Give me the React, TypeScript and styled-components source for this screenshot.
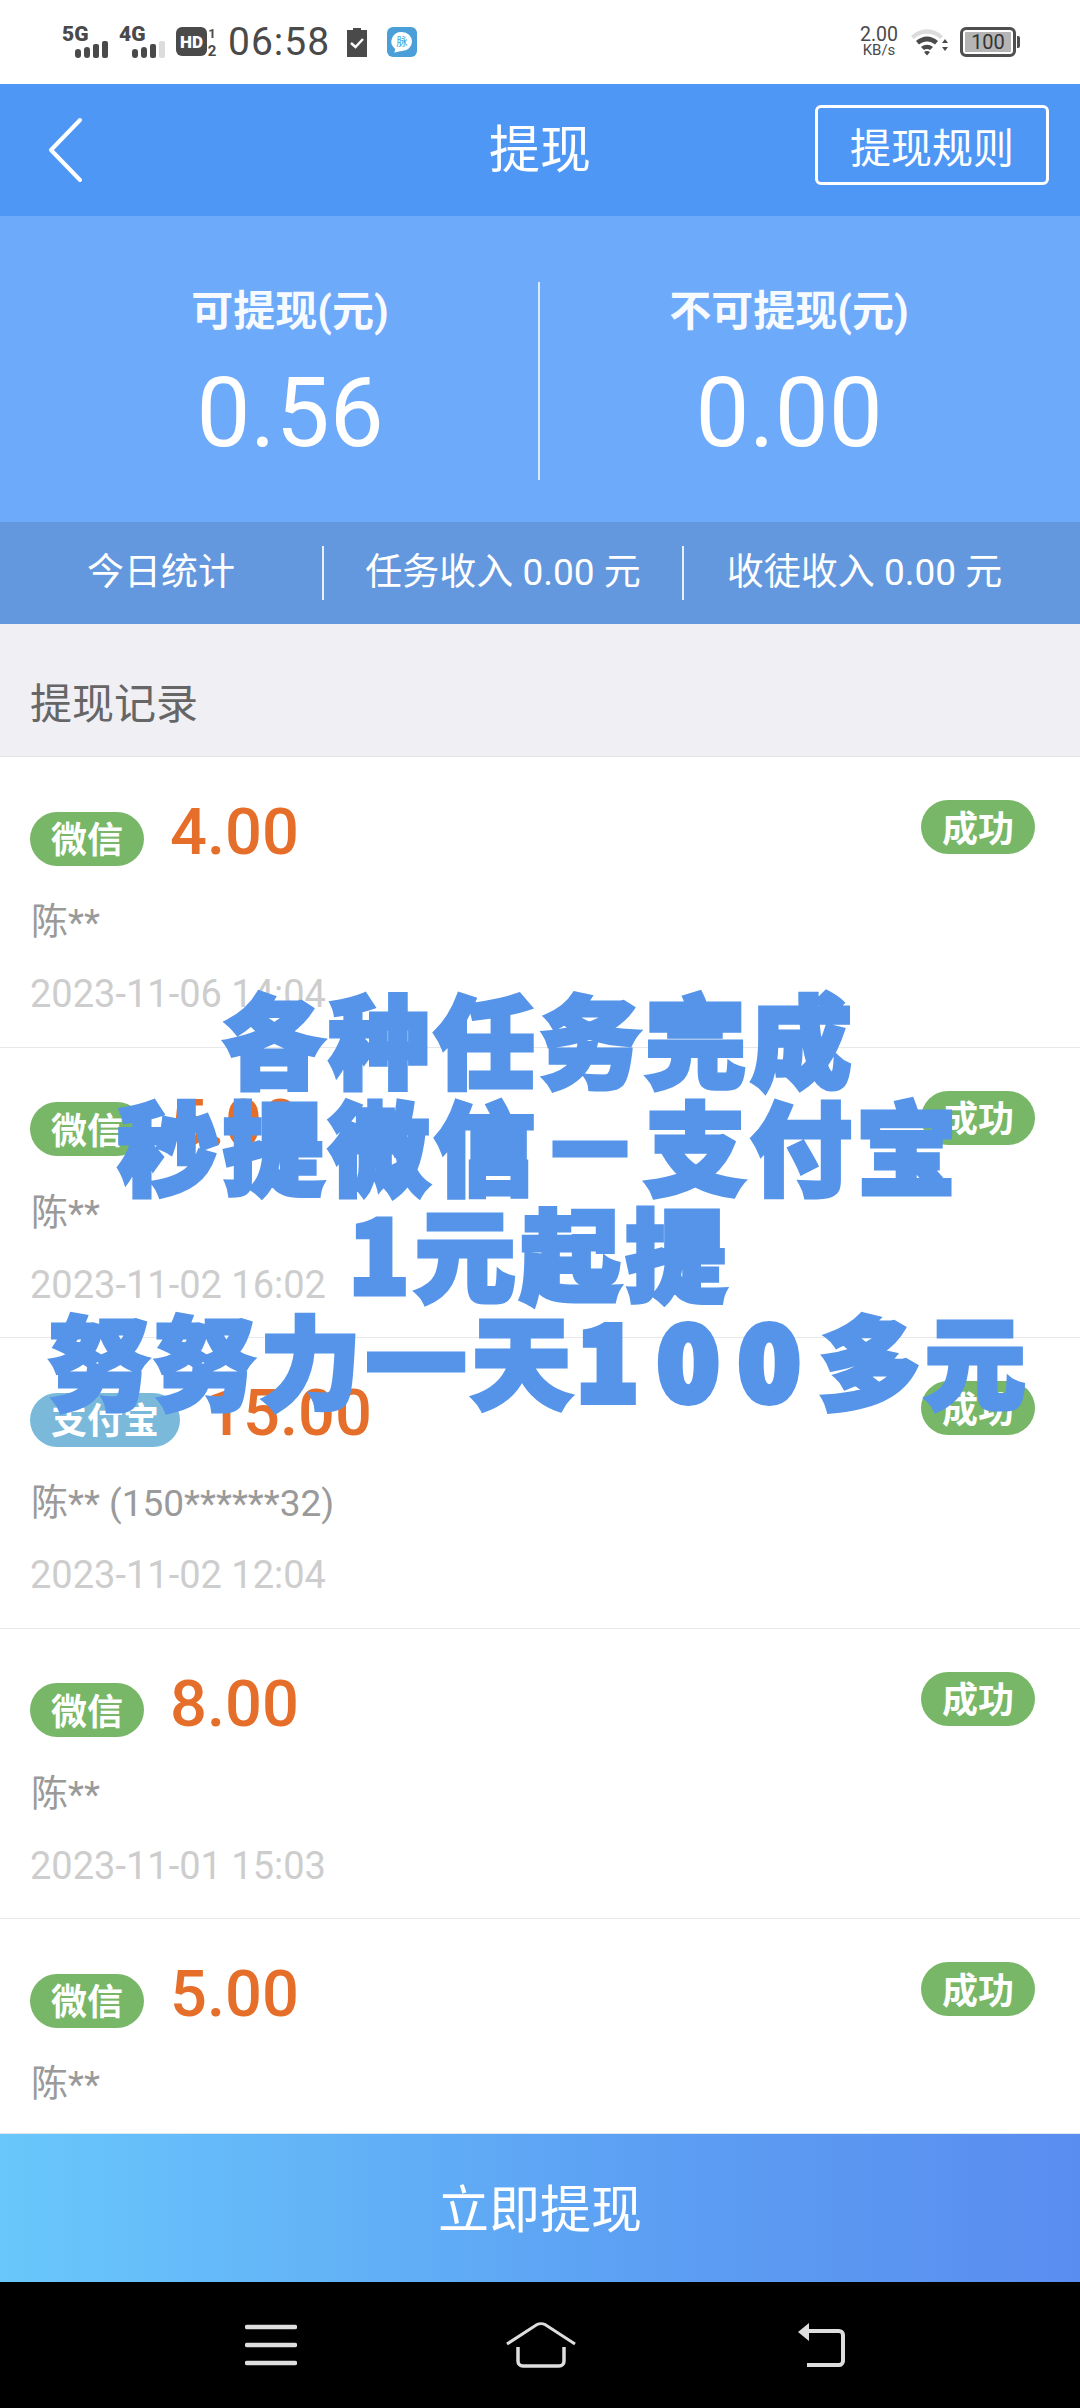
import React from "react";
import styled, { createGlobalStyle } from "styled-components";

const sans = `Roboto, "Noto Sans CJK SC", sans-serif`;

const Global = createGlobalStyle`
  html, body { margin: 0; padding: 0; background: #fff; }
  * { box-sizing: border-box; }
`;

const Screen = styled.div`
  position: relative;
  width: 1080px;
  height: 2408px;
  display: flex;
  flex-direction: column;
  overflow: hidden;
  background: #fff;
  font-family: ${sans};
`;

const StatusBar = styled.div`
  height: 84px;
  flex: none;
  display: flex;
  align-items: center;
  justify-content: space-between;
  padding: 0 60px 0 62px;
  color: #4a4a4a;
`;
const StatusGroup = styled.div`
  display: flex;
  align-items: center;
`;
const Clock = styled.span`
  font-size: 39px;
  letter-spacing: 1px;
  margin: 0 16px 0 10px;
  line-height: 1;
`;
const Speed = styled.div`
  display: flex;
  flex-direction: column;
  align-items: center;
  font-size: 19.5px;
  line-height: 16px;
  color: #4a4a4a;
  margin-right: 12px;
  small { font-size: 15px; line-height: 14px; }
`;
const Battery = styled.div`
  width: 56px;
  height: 30px;
  border: 3px solid #4f4f4f;
  border-radius: 6px;
  background: #b5b5b5;
  box-shadow: inset 0 0 0 2px #fff;
  font-size: 20px;
  line-height: 24px;
  text-align: center;
  color: #333;
  margin-left: 12px;
`;
const BatteryCap = styled.div`
  width: 3px;
  height: 12px;
  background: #4f4f4f;
  border-radius: 0 2px 2px 0;
  margin-left: 1px;
`;

const Header = styled.header`
  height: 132px;
  flex: none;
  display: flex;
  align-items: center;
  justify-content: space-between;
  position: relative;
  padding: 0 31px 0 48px;
  background: #4f97f5;
  color: #fff;
`;
const Title = styled.h1`
  position: absolute;
  left: 0;
  right: 0;
  margin: -8px 0 0;
  text-align: center;
  font-size: 51px;
  font-weight: 400;
`;
const RuleButton = styled.button`
  width: 234px;
  height: 80px;
  margin-top: -11px;
  border: 3px solid #fff;
  border-radius: 6px;
  background: transparent;
  color: #fff;
  font: 400 41px ${sans};
  padding: 0;
  position: relative;
`;

const Balance = styled.section`
  height: 306px;
  flex: none;
  display: grid;
  grid-template-columns: 538px 2px 1fr;
  align-items: start;
  background: #6eaafa;
  color: #fff;
`;
const BalanceColumn = styled.div<{ $offset: number }>`
  display: flex;
  flex-direction: column;
  align-items: center;
  padding-top: 71px;
  transform: translateX(${(p) => p.$offset}px);
`;
const BalanceLabel = styled.div`
  font-size: 42px;
  font-weight: 700;
  line-height: 50px;
  opacity: 0.95;
`;
const BalanceValue = styled.div`
  font-size: 96px;
  font-weight: 400;
  line-height: 112px;
  margin-top: 20px;
`;
const BalanceRule = styled.div`
  height: 198px;
  margin-top: 66px;
  background: rgba(255, 255, 255, 0.75);
`;

const Today = styled.section`
  height: 102px;
  flex: none;
  display: grid;
  grid-template-columns: 322px 360px 1fr;
  align-items: center;
  background: #6398de;
  color: #fff;
  font-size: 37px;
`;
const TodayCell = styled.div<{ $rule?: boolean; $inset?: number }>`
  height: 54px;
  line-height: 54px;
  text-align: center;
  white-space: nowrap;
  padding-right: ${(p) => p.$inset ?? 0}px;
  border-left: ${(p) => (p.$rule ? "2px solid rgba(255,255,255,.85)" : "0")};
`;

const RecordTitle = styled.div`
  height: 133px;
  flex: none;
  display: flex;
  align-items: center;
  padding: 20px 30px 0;
  background: #efeff4;
  border-bottom: 1px solid #e3e3e6;
  color: #666;
  font-size: 42px;
`;

const List = styled.div`
  flex: 1;
  min-height: 0;
  overflow: hidden;
`;
const Row = styled.article`
  height: 290.5px;
  display: flex;
  justify-content: space-between;
  align-items: flex-start;
  padding: 0 45px 0 30px;
  border-bottom: 1px solid #e8e8e8;
`;
const RowMain = styled.div`
  display: flex;
  flex-direction: column;
`;
const RowTop = styled.div`
  display: flex;
  align-items: center;
  margin-top: 38px;
  height: 74px;
`;
const Pill = styled.span<{ $tone: string }>`
  display: inline-flex;
  align-items: center;
  height: 54px;
  padding: 0 21px 3px;
  border-radius: 27px;
  background: ${(p) => p.$tone};
  color: #fff;
  font-size: 36px;
  font-weight: 700;
  white-space: nowrap;
`;
const PaymentPill = styled(Pill)`
  margin-top: 13px;
`;
const StatusPill = styled(Pill)`
  margin-top: 43px;
`;
const Amount = styled.span`
  margin-left: 26px;
  font-size: 65px;
  font-weight: 500;
  line-height: 74px;
  color: #e56f2a;
`;
const Payee = styled.div`
  margin: 31px 0 0 1px;
  font-size: 37px;
  line-height: 46px;
  color: #9a9a9a;
`;
const Stamp = styled.div`
  margin: 25px 0 0;
  font-size: 38px;
  line-height: 46px;
  color: #cdcdcd;
`;

const Withdraw = styled.button`
  height: 149px;
  flex: none;
  border: 0;
  border-top: 1px solid #dfe8f2;
  padding: 0 0 4px;
  background: linear-gradient(90deg, #69c7fb 0%, #5c9ff3 60%, #5a8df0 100%);
  color: #fff;
  font: 400 51px ${sans};
`;

const NavBar = styled.nav`
  height: 126px;
  flex: none;
  background: #000;
  display: grid;
  grid-template-columns: 260px 292px 48px;
  align-items: center;
  padding: 0 0 0 245px;
`;

const Promo = styled.div`
  position: absolute;
  left: 0;
  right: 0;
  top: 983px;
  text-align: center;
  font-family: "Noto Sans CJK SC", sans-serif;
  font-weight: 900;
  font-size: 100px;
  line-height: 107px;
  letter-spacing: 5.5px;
  color: #5594e8;
  -webkit-text-stroke: 5px #5594e8;
  white-space: nowrap;
`;
const WideDigits = styled.span`
  letter-spacing: 20px;
  -webkit-text-stroke-width: 8px;
`;

const Signal = ({ tag, fade }: { tag: string; fade?: boolean }) => (
  <svg width="57" height="34" viewBox="0 0 57 34">
    <text x="0" y="16" fontFamily="Roboto" fontWeight="900" fontSize="21" fill="#4a4a4a">{tag}</text>
    <rect x="13" y="24" width="6" height="9" rx="3" fill="#4a4a4a" />
    <rect x="22" y="22" width="6" height="11" rx="3" fill="#4a4a4a" />
    <rect x="31" y="19" width="6" height="14" rx="2" fill="#4a4a4a" />
    <rect x="40" y="16" width="6" height="17" rx="2" fill={fade ? "#dcdcdc" : "#4a4a4a"} />
  </svg>
);

const HdMark = () => (
  <svg width="42" height="32" viewBox="0 0 42 32">
    <rect x="0" y="1" width="31" height="29" rx="6" fill="#4a4a4a" />
    <text x="15.5" y="22" textAnchor="middle" fontFamily="Roboto" fontWeight="900" fontSize="17" fill="#fff">HD</text>
    <text x="36" y="12" textAnchor="middle" fontFamily="Roboto" fontWeight="700" fontSize="13" fill="#4a4a4a">1</text>
    <text x="36" y="30" textAnchor="middle" fontFamily="Roboto" fontWeight="700" fontSize="15" fill="#4a4a4a">2</text>
  </svg>
);

const Clipboard = () => (
  <svg width="22" height="30" viewBox="0 0 22 30">
    <path d="M1 3h6V1h8v2h6v27H1z" fill="#4a4a4a" />
    <path d="M5 16l4.500 4L17 12" fill="none" stroke="#fff" strokeWidth="2.400" />
  </svg>
);

const ChatIcon = styled.svg`
  margin-left: 19px;
`;
const ChatApp = () => (
  <ChatIcon width="30" height="30" viewBox="0 0 30 30">
    <rect width="30" height="30" rx="6" fill="#4b9fd9" />
    <path d="M15 5a10 9.500 0 0 1 0 19c-3 0-5 1.500-8 1.500 1-1.500 1.500-3 .7-4A10 9.500 0 0 1 15 5z" fill="#fff" />
    <text x="15" y="19" textAnchor="middle" fontSize="11" fill="#3aa3dd" fontFamily="Noto Sans CJK SC">脉</text>
  </ChatIcon>
);

const Wifi = () => (
  <svg width="38" height="30" viewBox="0 0 38 30">
    <path d="M1 9C10 0 24 0 33 9l-2.500 3C22 5 12 5 3.500 12z" fill="#dcdcdc" />
    <path d="M6 14c7-6 15-6 22 0l-3 3.500c-5-4-11-4-16 0z" fill="#4a4a4a" />
    <path d="M11 20c4-3 8-3 12 0l-3 3c-2-1.500-4-1.500-6 0z" fill="#4a4a4a" />
    <path d="M14 25c2-1.300 4-1.300 6 0l-3 3.500z" fill="#4a4a4a" />
    <path d="M32 16l3-4 3 4zM32 20h6l-3 4z" fill="#4a4a4a" />
  </svg>
);

const Back = () => (
  <svg width="36" height="66" viewBox="0 0 36 66">
    <path d="M32 3L3 33l29 30" fill="none" stroke="#fff" strokeWidth="4" strokeLinecap="round" strokeLinejoin="round" />
  </svg>
);

const MenuKey = () => (
  <svg width="52" height="42" viewBox="0 0 52 42">
    <path d="M2 3h48M2 21h48M2 39h48" stroke="#dedede" strokeWidth="4.500" strokeLinecap="round" />
  </svg>
);
const HomeKey = () => (
  <svg width="72" height="46" viewBox="0 0 72 46">
    <path d="M2 22L32 2.500c2-1 6-1 8 0L70 22" fill="none" stroke="#dedede" strokeWidth="3" />
    <path d="M13 25v14c0 3 2 5 5 5h36c3 0 5-2 5-5V25" fill="none" stroke="#dedede" strokeWidth="3.500" />
  </svg>
);
const ReturnKey = () => (
  <svg width="48" height="44" viewBox="0 0 48 44">
    <path d="M1 9L12 0v18z" fill="#dedede" />
    <path d="M10 8h32c2 0 4 1.500 4 4v26c0 2-2 4-4 4H10" fill="none" stroke="#dedede" strokeWidth="4" />
  </svg>
);

type Withdrawal = { channel: "微信" | "支付宝"; amount: string; payee: string; time: string };

const records: Withdrawal[] = [
  { channel: "微信", amount: "4.00", payee: "陈**", time: "2023-11-06 14:04" },
  { channel: "微信", amount: "5.00", payee: "陈**", time: "2023-11-02 16:02" },
  { channel: "支付宝", amount: "15.00", payee: "陈** (150******32)", time: "2023-11-02 12:04" },
  { channel: "微信", amount: "8.00", payee: "陈**", time: "2023-11-01 15:03" },
  { channel: "微信", amount: "5.00", payee: "陈**", time: "2023-11-01 11:20" },
];

export default function App() {
  return (
    <Screen>
      <Global />
      <StatusBar>
        <StatusGroup>
          <Signal tag="5G" />
          <Signal tag="4G" fade />
          <HdMark />
          <Clock>06:58</Clock>
          <Clipboard />
          <ChatApp />
        </StatusGroup>
        <StatusGroup>
          <Speed>
            2.00
            <small>KB/s</small>
          </Speed>
          <Wifi />
          <Battery>100</Battery>
          <BatteryCap />
        </StatusGroup>
      </StatusBar>

      <Header>
        <Back />
        <Title>提现</Title>
        <RuleButton>提现规则</RuleButton>
      </Header>

      <Balance>
        <BalanceColumn $offset={21}>
          <BalanceLabel>可提现(元)</BalanceLabel>
          <BalanceValue>0.56</BalanceValue>
        </BalanceColumn>
        <BalanceRule />
        <BalanceColumn $offset={-21}>
          <BalanceLabel>不可提现(元)</BalanceLabel>
          <BalanceValue>0.00</BalanceValue>
        </BalanceColumn>
      </Balance>

      <Today>
        <TodayCell>今日统计</TodayCell>
        <TodayCell $rule>任务收入 0.00 元</TodayCell>
        <TodayCell $rule $inset={35}>收徒收入 0.00 元</TodayCell>
      </Today>

      <RecordTitle>提现记录</RecordTitle>

      <List>
        {records.map((r, i) => (
          <Row key={i}>
            <RowMain>
              <RowTop>
                <PaymentPill $tone={r.channel === "微信" ? "#77b767" : "#7ab9d9"}>{r.channel}</PaymentPill>
                <Amount>{r.amount}</Amount>
              </RowTop>
              <Payee>{r.payee}</Payee>
              <Stamp>{r.time}</Stamp>
            </RowMain>
            <StatusPill $tone="#77b767">成功</StatusPill>
          </Row>
        ))}
      </List>

      <Withdraw>立即提现</Withdraw>

      <NavBar>
        <MenuKey />
        <HomeKey />
        <ReturnKey />
      </NavBar>

      <Promo>
        各种任务完成
        <br />
        秒提微信－支付宝
        <br />
        1元起提
        <br />
        努努力一天<WideDigits>100</WideDigits>多元
      </Promo>
    </Screen>
  );
}
